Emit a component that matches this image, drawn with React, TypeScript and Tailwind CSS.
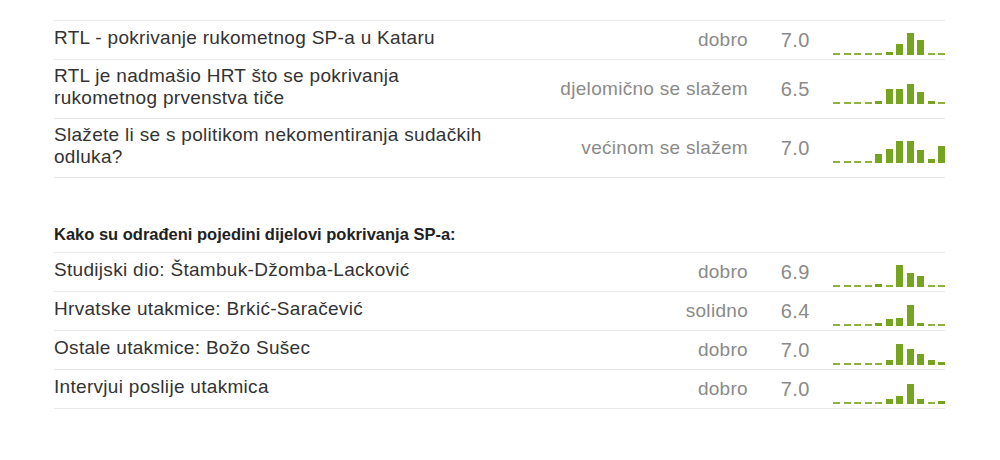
import React from "react";

type Row = {
  title: string;
  label: string;
  score: string;
  bars: number[];
};

const main: Row[] = [
  {
    title: "RTL - pokrivanje rukometnog SP-a u Kataru",
    label: "dobro",
    score: "7.0",
    bars: [0, 0, 0, 0, 0, 3, 11, 22, 15, 0, 0],
  },
  {
    title: "RTL je nadmašio HRT što se pokrivanja rukometnog prvenstva tiče",
    label: "djelomično se slažem",
    score: "6.5",
    bars: [0, 0, 0, 0, 3, 15, 15, 20, 12, 3, 0],
  },
  {
    title: "Slažete li se s politikom nekomentiranja sudačkih odluka?",
    label: "većinom se slažem",
    score: "7.0",
    bars: [0, 0, 0, 0, 9, 14, 22, 22, 13, 4, 17],
  },
];

const parts: Row[] = [
  {
    title: "Studijski dio: Štambuk-Džomba-Lacković",
    label: "dobro",
    score: "6.9",
    bars: [0, 0, 0, 0, 3, 0, 22, 14, 11, 0, 0],
  },
  {
    title: "Hrvatske utakmice: Brkić-Saračević",
    label: "solidno",
    score: "6.4",
    bars: [0, 0, 0, 0, 3, 7, 8, 21, 3, 0, 0],
  },
  {
    title: "Ostale utakmice: Božo Sušec",
    label: "dobro",
    score: "7.0",
    bars: [0, 0, 0, 0, 0, 5, 21, 16, 11, 5, 3],
  },
  {
    title: "Intervjui poslije utakmica",
    label: "dobro",
    score: "7.0",
    bars: [0, 0, 0, 0, 0, 5, 8, 20, 5, 0, 3],
  },
];

function Histogram({ bars }: { bars: number[] }) {
  // negative bottom margin keeps the row height set by the text line
  return (
    <div className="ml-[23px] mb-[-5px] mt-[2px] flex h-[22px] w-[112px] items-end gap-[3.5px]">
      {bars.map((h, i) => (
        <div
          key={i}
          className={h === 0 ? "w-[7px] bg-[#8cb43c]" : "w-[7px] bg-[#76a420]"}
          style={{ height: h === 0 ? 2 : h }}
        />
      ))}
    </div>
  );
}

function RatingRow({ row }: { row: Row }) {
  return (
    <div className="flex min-h-[39px] items-center border-b border-[#e8e8e8] py-[5px]">
      <div className="w-[445px] pb-[4px] text-[19px] leading-[22px] tracking-[0.3px] text-[#333]">{row.title}</div>
      <div className="flex-1 text-right text-[19px] leading-[20px] tracking-[0.3px] text-[#8a8a8a]">{row.label}</div>
      <div className="w-[62px] text-right text-[20px] leading-[20px] tracking-[0.5px] text-[#8a8a8a]">{row.score}</div>
      <Histogram bars={row.bars} />
    </div>
  );
}

export default function App() {
  return (
    <div className="h-[460px] w-[1000px] bg-white pt-[20px] font-['Liberation_Sans',Arial,sans-serif]">
      <div className="ml-[54px] w-[891px]">
        <div className="border-t border-[#e8e8e8]">
          {main.map((r) => (
            <RatingRow key={r.title} row={r} />
          ))}
        </div>

        <div className="mt-[46px] pb-[8px] text-[16.5px] font-bold leading-[20px] text-[#222]">
          Kako su odrađeni pojedini dijelovi pokrivanja SP-a:
        </div>
        <div className="border-t border-[#e8e8e8]">
          {parts.map((r) => (
            <RatingRow key={r.title} row={r} />
          ))}
        </div>
      </div>
    </div>
  );
}
